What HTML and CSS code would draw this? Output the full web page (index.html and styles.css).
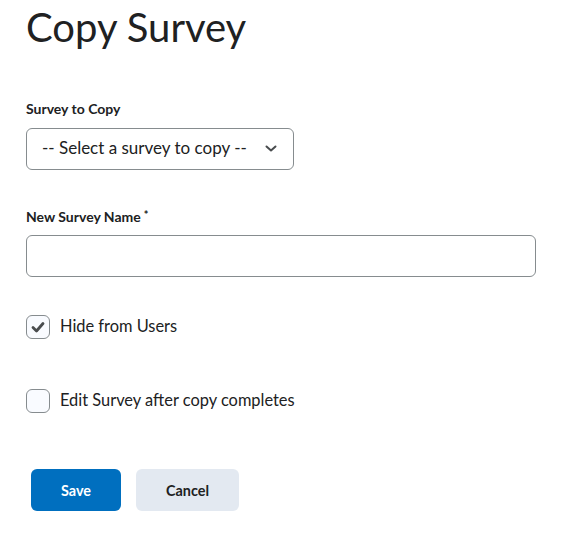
FILE: index.html
```html
<!DOCTYPE html>
<html lang="en">
<head>
<meta charset="utf-8">
<title>Copy Survey</title>
<link rel="stylesheet" href="styles.css">
</head>
<body>
<div class="page">
  <h1 class="title">Copy Survey</h1>

  <div class="field field-select">
    <label class="label" for="survey">Survey to Copy</label>
    <div class="select">
      <span class="select-text">-- Select a survey to copy --</span>
      <svg class="chevron" width="14" height="8" viewBox="0 0 14 8" aria-hidden="true">
        <polyline points="2.5,1.5 7,5.5 11.5,1.5" fill="none" stroke="#494c4e" stroke-width="2" stroke-linecap="round" stroke-linejoin="round"/>
      </svg>
    </div>
  </div>

  <div class="field field-name">
    <label class="label" for="name">New Survey Name<span class="req">*</span></label>
    <div class="input" id="name"></div>
  </div>

  <div class="check check-first">
    <span class="box checked">
      <svg width="14" height="12" viewBox="0 0 14 12" aria-hidden="true">
        <polyline points="2,6.5 5.5,10 12,2.5" fill="none" stroke="#494c4e" stroke-width="2.8" stroke-linecap="round" stroke-linejoin="round"/>
      </svg>
    </span>
    <span class="check-label">Hide from Users</span>
  </div>

  <div class="check check-second">
    <span class="box"></span>
    <span class="check-label">Edit Survey after copy completes</span>
  </div>

  <div class="buttons">
    <button class="btn btn-primary">Save</button>
    <button class="btn btn-secondary">Cancel</button>
  </div>
</div>
</body>
</html>
```

FILE: styles.css
```css
html, body {
  margin: 0;
  padding: 0;
  background: #ffffff;
}

body {
  font-family: Lato, "Open Sans", "Liberation Sans", sans-serif;
  color: #202122;
}

.page {
  padding: 3px 0 0 26px;
  display: flex;
  flex-direction: column;
  align-items: flex-start;
}

.title {
  margin: 0;
  font-size: 40px;
  line-height: 48px;
  font-weight: 400;
  color: #202122;
}

.field {
  display: flex;
  flex-direction: column;
  align-items: flex-start;
}

.field-select {
  margin-top: 48px;
}

.field-name {
  margin-top: 37px;
}

.label {
  font-size: 14px;
  line-height: 20px;
  font-weight: 700;
  color: #202122;
  margin-bottom: 8px;
}

.field-select .label {
  margin-bottom: 9px;
}

.req {
  font-size: 11px;
  vertical-align: top;
  margin-left: 3px;
  line-height: 16px;
}

.select {
  box-sizing: border-box;
  width: 268px;
  height: 42px;
  border: 1px solid #868c8f;
  border-radius: 6px;
  display: flex;
  align-items: center;
  justify-content: space-between;
  padding: 0 15px 0 15px;
}

.select-text {
  font-size: 17px;
  line-height: 22px;
  padding-bottom: 3px;
  color: #202122;
}

.chevron {
  display: block;
}

.input {
  box-sizing: border-box;
  width: 510px;
  height: 42px;
  border: 1px solid #868c8f;
  border-radius: 6px;
  background: #ffffff;
}

.check {
  display: flex;
  align-items: center;
  gap: 10px;
  height: 24px;
}

.check-first {
  margin-top: 38px;
}

.check-second {
  margin-top: 50px;
}

.box {
  box-sizing: border-box;
  width: 24px;
  height: 24px;
  border: 1px solid #868c8f;
  border-radius: 6px;
  background: #f9fbff;
  display: flex;
  align-items: center;
  justify-content: center;
}

.check-label {
  font-size: 16.4px;
  line-height: 22px;
  padding-bottom: 2px;
  color: #202122;
}

.buttons {
  margin-top: 56px;
  margin-left: 5px;
  display: flex;
  gap: 15px;
}

.btn {
  font-family: Lato, "Open Sans", "Liberation Sans", sans-serif;
  font-size: 14.4px;
  font-weight: 700;
  height: 42px;
  padding: 0 30px;
  border: none;
  border-radius: 6px;
  cursor: pointer;
}

.btn-primary {
  background: #006fbf;
  color: #ffffff;
}

.btn-secondary {
  background: #e3e9f1;
  color: #202122;
}
```
